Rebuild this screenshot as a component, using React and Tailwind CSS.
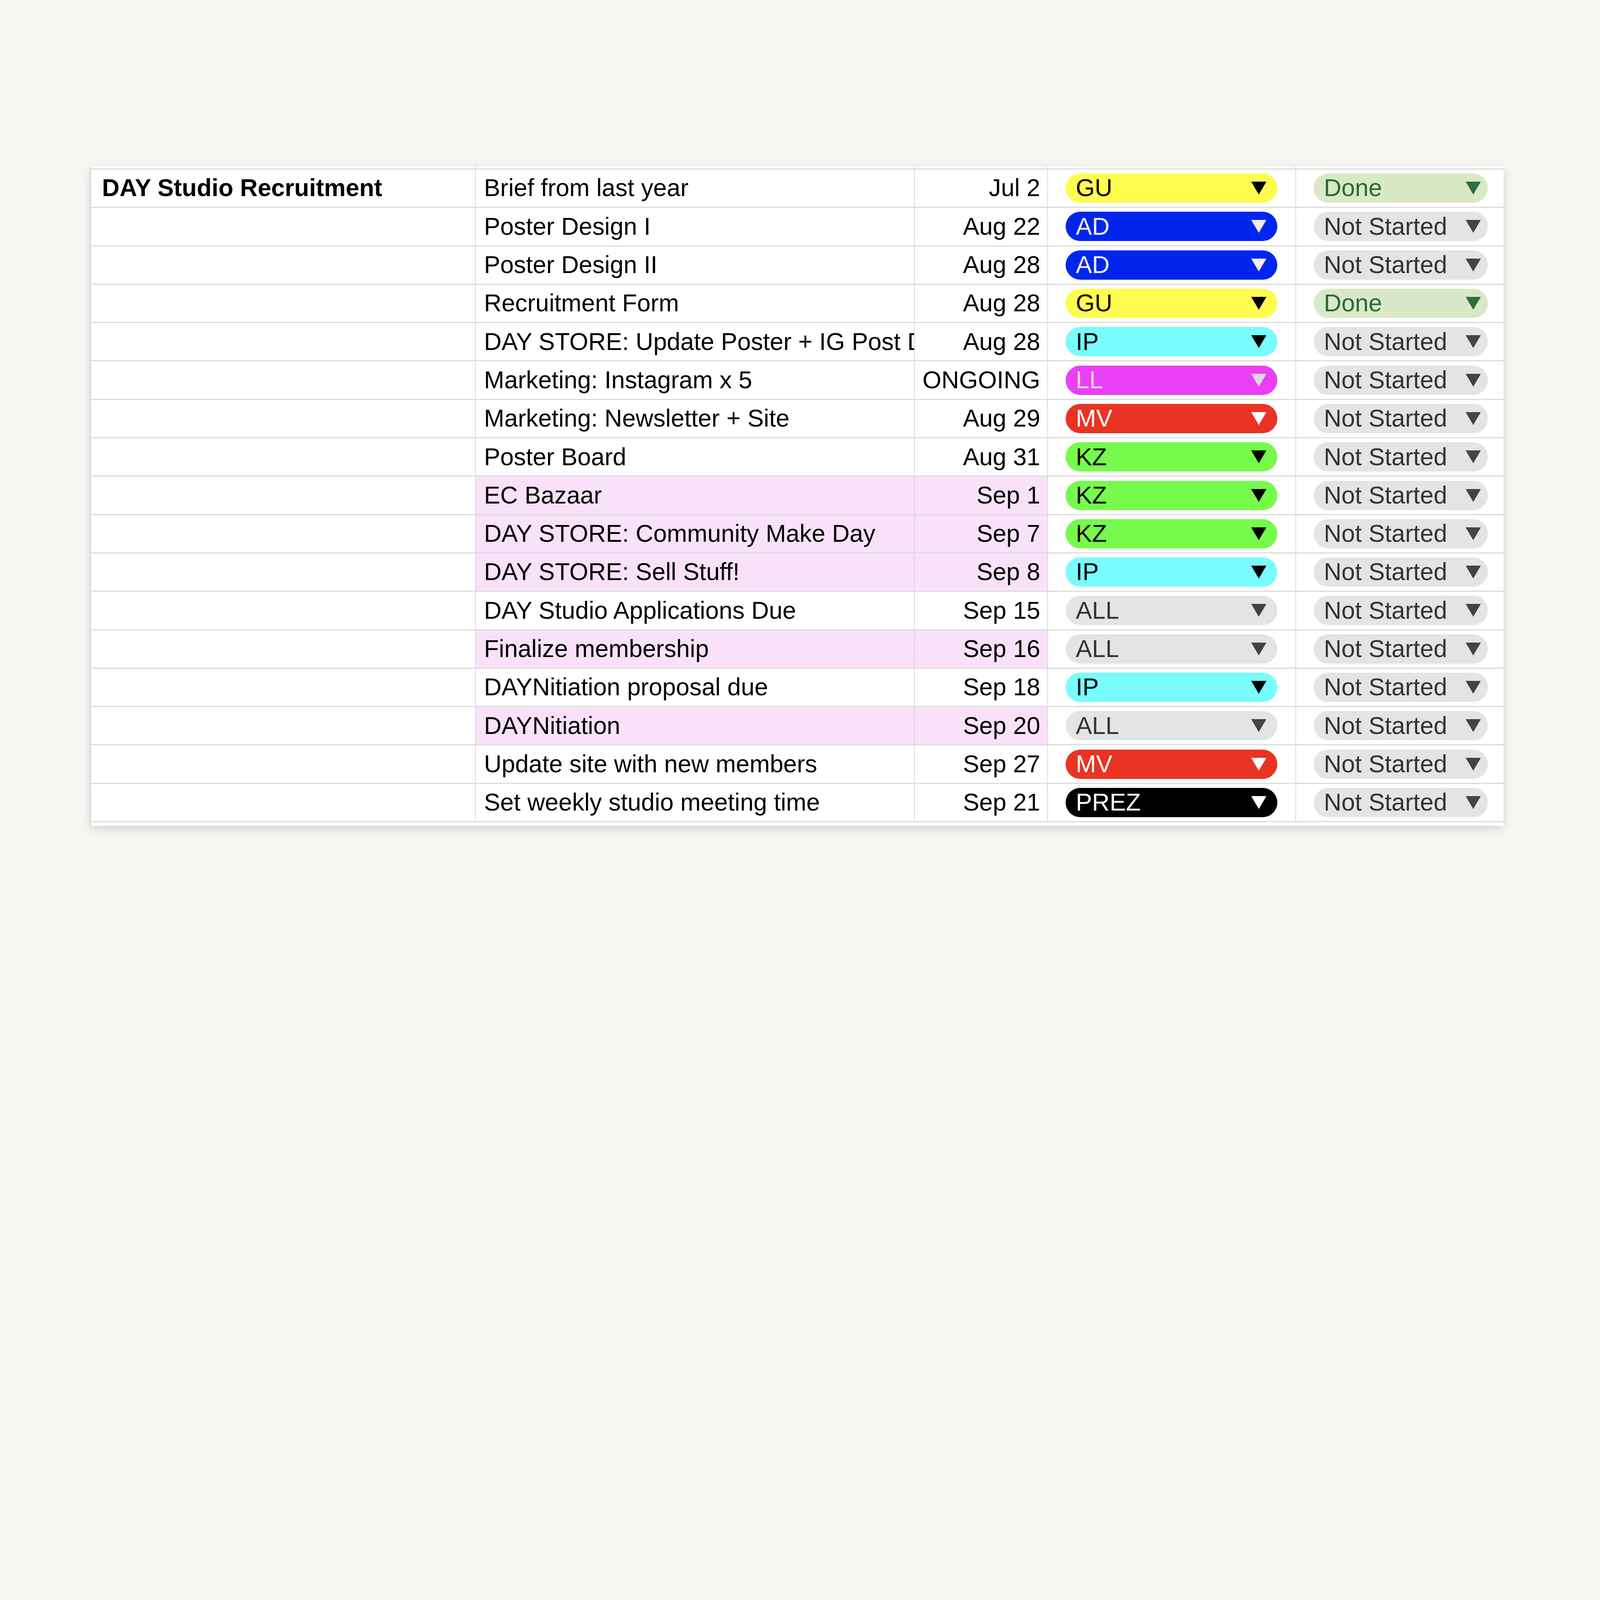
const rows = [
  ["Brief from last year","Jul 2","GU","Done",false],
  ["Poster Design I","Aug 22","AD","Not Started",false],
  ["Poster Design II","Aug 28","AD","Not Started",false],
  ["Recruitment Form","Aug 28","GU","Done",false],
  ["DAY STORE: Update Poster + IG Post Design","Aug 28","IP","Not Started",false],
  ["Marketing: Instagram x 5","ONGOING","LL","Not Started",false],
  ["Marketing: Newsletter + Site","Aug 29","MV","Not Started",false],
  ["Poster Board","Aug 31","KZ","Not Started",false],
  ["EC Bazaar","Sep 1","KZ","Not Started",true],
  ["DAY STORE: Community Make Day","Sep 7","KZ","Not Started",true],
  ["DAY STORE: Sell Stuff!","Sep 8","IP","Not Started",true],
  ["DAY Studio Applications Due","Sep 15","ALL","Not Started",false],
  ["Finalize membership","Sep 16","ALL","Not Started",true],
  ["DAYNitiation proposal due","Sep 18","IP","Not Started",false],
  ["DAYNitiation","Sep 20","ALL","Not Started",true],
  ["Update site with new members","Sep 27","MV","Not Started",false],
  ["Set weekly studio meeting time","Sep 21","PREZ","Not Started",false],
];
const who = {
  GU: ["bg-[#fffb4f]", "text-black", "#000"],
  AD: ["bg-[#0026ee]", "text-[#f5f0e0]", "#f0ece0"],
  IP: ["bg-[#78fcfd]", "text-black", "#000"],
  LL: ["bg-[#ea3ff7]", "text-[#dcdcdc]", "#dcdcdc"],
  MV: ["bg-[#e93323]", "text-white", "#fff"],
  KZ: ["bg-[#76fa4c]", "text-black", "#000"],
  ALL: ["bg-[#e4e4e4]", "text-[#333]", "#444"],
  PREZ: ["bg-black", "text-white", "#fff"],
};
function Arrow({ c }) {
  return (
    <svg width="39" height="33" viewBox="0 0 66 56" className="shrink-0">
      <polygon points="0,0 66,0 33,56" fill={c} />
    </svg>
  );
}
export default function App() {
  return (
    <div className="w-full min-h-screen bg-[#f7f6f3] pt-[426px] pl-[231px]" style={{ fontFamily: '"Liberation Sans", Arial, sans-serif' }}>
      <div className="w-[3618px] bg-white shadow-[0_8px_24px_rgba(0,0,0,0.14)] border-l-[2px] border-[#d0d0d0] pb-[9px]">
        <div className="flex h-[8px] border-b-[3px] border-[#dcdcdc]">
          <div className="w-[985px] border-r-[2px] border-[#dadada]" />
          <div className="w-[1124px] border-r-[2px] border-[#dadada]" />
          <div className="w-[341px] border-r-[2px] border-[#dadada]" />
          <div className="w-[635px] border-r-[2px] border-[#dadada]" />
          <div className="flex-1" />
        </div>
        {rows.map(([task, date, w, status, pink], i) => {
          const [bg, tc, ac] = who[w];
          const done = status === "Done";
          return (
            <div key={i} className="flex h-[98.3px] border-b-[3.5px] border-[#dcdcdc] text-[62.4px] leading-none text-black">
              <div className="w-[985px] border-r-[2px] border-[#dadada] flex items-center pl-[28px] font-bold">
                {i === 0 ? "DAY Studio Recruitment" : ""}
              </div>
              <div className={`w-[1124px] border-r-[2px] border-[#dadada] flex items-center pl-[21px] overflow-hidden whitespace-nowrap ${pink ? "bg-[#f9e2f9]" : ""}`}>
                {task}
              </div>
              <div className={`w-[341px] border-r-[2px] border-[#dadada] flex items-center justify-end pr-[18px] whitespace-nowrap ${pink ? "bg-[#f9e2f9]" : ""}`}>
                {date}
              </div>
              <div className="w-[635px] border-r-[2px] border-[#dadada] flex items-center pl-[45px]">
                <div className={`w-[542px] h-[75px] rounded-full flex items-center justify-between pl-[26px] pr-[28px] ${bg} ${tc}`}>
                  <span>{w}</span>
                  <Arrow c={ac} />
                </div>
              </div>
              <div className="flex-1 flex items-center pl-[45px]">
                <div className={`w-[446px] h-[75px] rounded-full flex items-center justify-between pl-[26px] pr-[18px] ${done ? "bg-[#d9e9c6] text-[#2a6a3a]" : "bg-[#e4e4e4] text-[#333]"}`}>
                  <span>{status}</span>
                  <Arrow c={done ? "#2e6e40" : "#444"} />
                </div>
              </div>
            </div>
          );
        })}
      </div>
    </div>
  );
}
